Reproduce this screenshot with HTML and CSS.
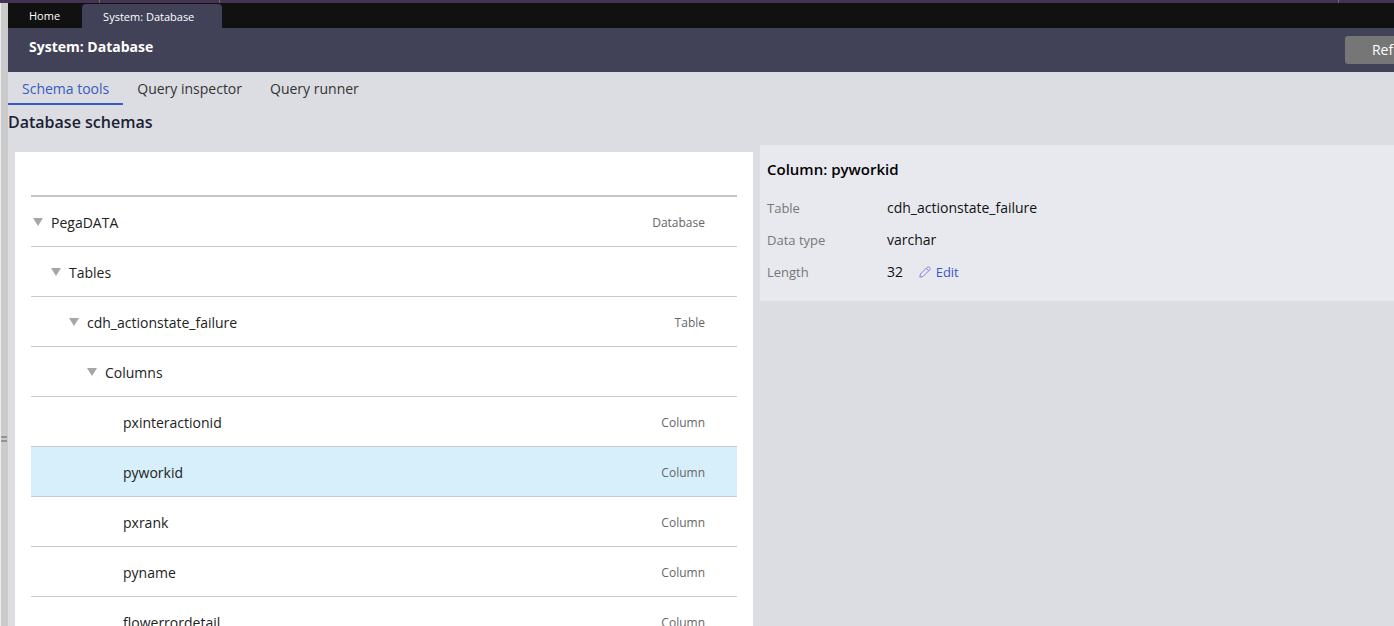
FILE: index.html
```html
<!DOCTYPE html>
<html lang="en">
<head>
<meta charset="utf-8">
<title>System: Database</title>
<link rel="stylesheet" href="styles.css">
</head>
<body>
<div class="app">
  <div class="topstrip"><span class="tick"></span><span class="tick"></span><span class="tick"></span></div>
  <div class="workspace">
    <div class="splitter"><span class="grip"></span></div>
    <div class="main">
      <nav class="doctabs">
        <a class="doctab" href="#">Home</a>
        <a class="doctab doctab-active" href="#">System: Database</a>
      </nav>
      <header class="titlebar">
        <h1 class="title">System: Database</h1>
        <button class="refresh" type="button">Refresh</button>
      </header>
      <nav class="subtabs">
        <a class="subtab subtab-active" href="#">Schema tools</a>
        <a class="subtab" href="#">Query inspector</a>
        <a class="subtab" href="#">Query runner</a>
      </nav>
      <h2 class="heading">Database schemas</h2>
      <div class="panels">
        <section class="tree-panel">
          <table class="tree">
            <tbody>
              <tr><td class="level1"><span class="arrow"></span>PegaDATA</td><td class="kind">Database</td></tr>
              <tr><td class="level2"><span class="arrow"></span>Tables</td><td class="kind"></td></tr>
              <tr><td class="level3"><span class="arrow"></span>cdh_actionstate_failure</td><td class="kind">Table</td></tr>
              <tr><td class="level4"><span class="arrow"></span>Columns</td><td class="kind"></td></tr>
              <tr><td class="leaf">pxinteractionid</td><td class="kind">Column</td></tr>
              <tr class="selected"><td class="leaf">pyworkid</td><td class="kind">Column</td></tr>
              <tr><td class="leaf">pxrank</td><td class="kind">Column</td></tr>
              <tr><td class="leaf">pyname</td><td class="kind">Column</td></tr>
              <tr><td class="leaf">flowerrordetail</td><td class="kind">Column</td></tr>
            </tbody>
          </table>
        </section>
        <section class="details">
          <h3 class="details-title">Column: pyworkid</h3>
          <dl class="fields">
            <dt>Table</dt><dd>cdh_actionstate_failure</dd>
            <dt>Data type</dt><dd>varchar</dd>
            <dt>Length</dt>
            <dd>32
              <a class="edit" href="#">
                <svg class="pencil" viewBox="0 0 12 12" width="12" height="12" aria-hidden="true"><path d="M.8 11.2 1.5 8 8.2 1.3Q9.3.2 10.5 1.4T10.7 3.8L4 10.5ZM7.2 2.3 9.7 4.8" fill="none" stroke="#8580e0" stroke-width="1"/></svg>Edit</a>
            </dd>
          </dl>
        </section>
      </div>
    </div>
  </div>
</div>
</body>
</html>
```
FILE: styles.css
```css
* { box-sizing: border-box; }

body {
  margin: 0;
  background: #dcdde2;
  color: #222;
  font-family: "Open Sans", "Noto Sans", sans-serif;
  font-size: 14px;
  line-height: 20px;
}

a { text-decoration: none; }

h1, h2, h3, dl, dd { margin: 0; }

.app {
  display: flex;
  flex-direction: column;
  height: 100vh;
  overflow: hidden;
}

.topstrip {
  display: flex;
  flex: none;
  height: 3px;
  padding: 0 55px 0 99px;
  background: #433454;
}

.tick {
  width: 1px;
  margin-right: 119px;
  background: #74677f;
}

.tick:last-child { margin: 0 0 0 auto; }

.workspace {
  display: flex;
  flex: 1;
  min-height: 0;
}

.splitter {
  display: flex;
  flex: none;
  align-items: center;
  width: 8px;
  border-left: 1px solid #eee;
  background: #cbcbcb;
}

.grip {
  width: 6px;
  height: 6px;
  margin-top: 248px;
  border: solid #929292;
  border-width: 2px 0;
}

.main {
  flex: 1;
  min-width: 0;
  overflow: hidden;
}

.doctabs {
  display: flex;
  height: 25px;
  background: #111;
  font-size: 11px;
}

.doctab {
  padding: 3px 22px 3px 21px;
  color: #fff;
}

.doctab-active {
  margin-top: 1px;
  padding: 3px 28px 3px 21px;
  border-radius: 4px 4px 0 0;
  background: #414257;
}

.titlebar {
  display: flex;
  justify-content: space-between;
  height: 44px;
  padding: 8px 0 8px 21px;
  background: #414257;
}

.title {
  color: #fff;
  font-size: 14px;
  font-weight: 700;
  line-height: 22px;
}

.refresh {
  flex: none;
  width: 104px;
  margin-right: -55px;
  border: 0;
  border-radius: 3px;
  background: #767676;
  color: #fff;
  font: inherit;
}

.subtabs {
  display: flex;
  height: 33px;
}

.subtab {
  padding: 7px 14px 4px;
  border-bottom: 2px solid transparent;
  color: #333;
}

.subtab-active {
  border-color: #3a5bbf;
  color: #3a5bbf;
}

.heading {
  color: #1b2233;
  font-size: 16px;
  font-weight: 600;
  line-height: 34px;
}

.panels {
  display: grid;
  grid-template-columns: 738fr 634fr;
  align-items: start;
  gap: 7px;
  padding: 6px 0 0 7px;
}

.tree-panel {
  margin-top: 7px;
  padding: 43px 16px 16px;
  background: #fff;
}

.tree {
  width: 100%;
  border-top: 2px solid #c6c6c6;
  border-spacing: 0;
}

.tree td {
  height: 50px;
  padding: 2px 0 0;
  border-bottom: 1px solid #c9c9c9;
}

.tree .level1 { padding-left: 2px; }
.tree .level2 { padding-left: 20px; }
.tree .level3 { padding-left: 38px; }
.tree .level4 { padding-left: 56px; }
.tree .leaf { padding-left: 92px; }

.tree .kind {
  padding-right: 32px;
  color: #666;
  font-size: 12px;
  text-align: right;
}

.tree .selected { background: #d6effb; }

.arrow {
  display: inline-block;
  margin-right: 8px;
  border: 5px solid transparent;
  border-top: 8px solid #a6a6a6;
  border-bottom: 0;
  vertical-align: 2px;
}

.details {
  padding: 14px 7px 13px;
  background: #e8e9ee;
}

.details-title {
  color: #000;
  font-size: 15px;
  font-weight: 600;
}

.fields {
  display: grid;
  grid-template-columns: 120px 1fr;
  padding-top: 13px;
  line-height: 32px;
}

.fields dt {
  color: #777;
  font-size: 13px;
}

.fields dd { color: #111; }

.edit {
  margin-left: 12px;
  color: #3a55cc;
  font-size: 13px;
}

.pencil {
  margin-right: 5px;
  vertical-align: -1px;
}
```
